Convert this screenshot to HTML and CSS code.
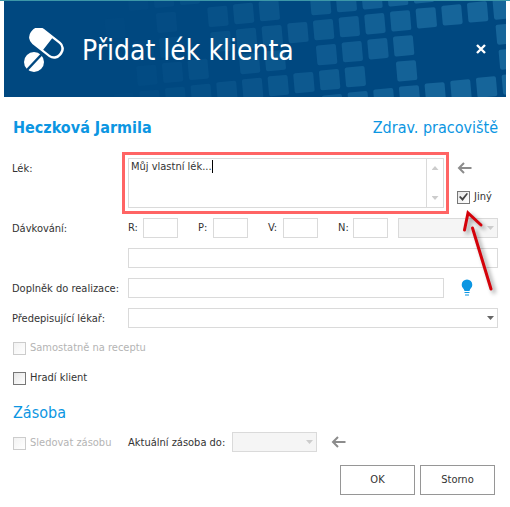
FILE: index.html
```html
<!DOCTYPE html>
<html lang="cs">
<head>
<meta charset="utf-8">
<title>Přidat lék klienta</title>
<link rel="stylesheet" href="styles.css">
</head>
<body>
<main class="dialog">
  <header class="banner">
    <svg class="tiles" id="tiles" width="502" height="96" viewBox="4 1 502 96" aria-hidden="true"></svg>
    <svg class="pills" width="40" height="46" viewBox="0 0 40 46" aria-hidden="true">
      <g transform="translate(22.500 15) rotate(38)">
        <rect x="-19" y="-9.500" width="38" height="19" rx="8.500" fill="#fff"/>
        <path d="M1.500 -7.300H10A6.500 6.500 0 0 1 16.500 -1V1A6.500 6.500 0 0 1 10 7.300H1.500Z" fill="#004880"/>
      </g>
      <circle cx="10" cy="34" r="10" fill="#fff"/>
      <path d="M3 42 18 26" stroke="#004880" stroke-width="2.500"/>
    </svg>
    <h1 class="title">Přidat lék klienta</h1>
    <button class="close" type="button" aria-label="Zavřít">
      <svg width="10" height="10" viewBox="0 0 10 10"><path d="M1 1 9 9M9 1 1 9" stroke="#fff" stroke-width="2.400"/></svg>
    </button>
  </header>

  <form class="form">
    <div class="heading">
      <h2 class="client">Heczková Jarmila</h2>
      <a class="workplace" href="#">Zdrav. pracoviště</a>
    </div>

    <div class="row drug">
      <label class="label" for="drug">Lék:</label>
      <div class="area">
        <textarea class="text" id="drug">Můj vlastní lék...</textarea>
        <span class="caret"></span>
        <span class="scroll"><i class="tri up"></i><i class="tri"></i></span>
        <span class="marker"></span>
      </div>
      <div class="side">
        <button class="back" type="button" aria-label="Zpět">
          <svg width="15" height="12" viewBox="0 0 15 12"><path d="M14.500 6H2M7 1 2 6 7 11" fill="none" stroke="#8c8c8c" stroke-width="2"/></svg>
        </button>
        <label class="check"><input type="checkbox" checked>Jiný</label>
        <svg class="pointer" width="40" height="90" viewBox="0 0 40 90" aria-hidden="true">
          <path d="M12.500 20 31 81M4.500 22 8 5 21 17" fill="none" stroke="#d4020a" stroke-width="3" stroke-linecap="round"/>
        </svg>
      </div>
    </div>

    <div class="row">
      <span class="label">Dávkování:</span>
      <div class="doses">
        <label class="dose">R:<input class="box" type="text"></label>
        <label class="dose">P:<input class="box" type="text"></label>
        <label class="dose">V:<input class="box" type="text"></label>
        <label class="dose">N:<input class="box" type="text"></label>
      </div>
      <span class="pick grow off"><select class="box" aria-label="Jednotka" disabled></select><i class="tri"></i></span>
    </div>

    <div class="row">
      <span class="label"></span>
      <input class="box grow" type="text" aria-label="Popis dávkování">
    </div>

    <div class="row">
      <label class="label" for="extra">Doplněk do realizace:</label>
      <input class="box grow" id="extra" type="text">
      <div class="side hint">
        <svg width="12" height="18" viewBox="0 0 12 18" role="img" aria-label="Nápověda"><path d="M6 0.500A5.300 5.300 0 0 1 11.300 6C11.300 8.600 9 9.500 8.500 12H3.500C3 9.500 0.700 8.600 0.700 6A5.300 5.300 0 0 1 6 0.500Z" fill="#0c96e2"/><path d="M3.500 13.500H8.500M4 16H8" stroke="#0c96e2" stroke-width="1"/></svg>
      </div>
    </div>

    <div class="row">
      <label class="label" for="doctor">Předepisující lékař:</label>
      <span class="pick grow"><select class="box" id="doctor"></select><i class="tri"></i></span>
    </div>

    <label class="check line off"><input type="checkbox" disabled>Samostatně na receptu</label>
    <label class="check line"><input type="checkbox">Hradí klient</label>

    <h2 class="section">Zásoba</h2>
    <div class="row stock">
      <label class="check label off"><input type="checkbox" disabled>Sledovat zásobu</label>
      <label class="until" for="until">Aktuální zásoba do:</label>
      <span class="pick date off"><select class="box" id="until" disabled></select><i class="tri"></i></span>
      <button class="back" type="button" aria-label="Zpět">
        <svg width="15" height="12" viewBox="0 0 15 12"><path d="M14.500 6H2M7 1 2 6 7 11" fill="none" stroke="#8c8c8c" stroke-width="2"/></svg>
      </button>
    </div>

    <div class="actions">
      <button class="button" type="submit">OK</button>
      <button class="button" type="button">Storno</button>
    </div>
  </form>
</main>
<script src="tiles.js"></script>
</body>
</html>
```
FILE: styles.css
```css
* { box-sizing: border-box; }

body {
  margin: 0;
  background: #fff;
  border-top: 1px solid #3c97a8;
  font: 11px/14px "DejaVu Sans Condensed", "DejaVu Sans", sans-serif;
  color: #333;
}

h1, h2 { margin: 0; font-weight: normal; }

button, input, select, textarea { font: inherit; color: inherit; }

.dialog { padding: 0 4px; }

.banner {
  position: relative;
  display: flex;
  align-items: center;
  height: 96px;
  padding: 0 20px;
  background: #004880;
  color: #fff;
  overflow: hidden;
}
.tiles { position: absolute; top: 0; right: 0; }
.pills { position: relative; margin: 4px 18px 0 0; }
.title { position: relative; flex: 1; padding-top: 4px; font-size: 28px; line-height: 32px; }
.close {
  position: relative;
  display: flex;
  padding: 0;
  border: 0;
  background: none;
}

.form { padding: 19px 4px 12px 8px; }

.heading {
  display: flex;
  justify-content: space-between;
  padding: 0 4px 0 1px;
  margin-bottom: 18px;
  font-size: 16px;
  line-height: 24px;
  color: #0c96e2;
}
.client { font-size: 16px; font-weight: bold; }
.workplace { color: inherit; text-decoration: none; }

.row {
  display: flex;
  align-items: center;
  height: 20px;
  padding-right: 4px;
  margin-bottom: 10px;
}
.label { width: 116px; flex: none; padding-top: 2px; white-space: nowrap; }
.grow { flex: 1; min-width: 0; }

.box {
  display: block;
  width: 100%;
  height: 20px;
  padding: 0 4px;
  border: 1px solid #dadada;
  border-radius: 0;
  background: #fff;
  appearance: none;
}
.box.grow { width: auto; }

.drug { height: 50px; align-items: flex-start; }
.drug .label { padding-top: 4px; }
.area { position: relative; flex: 1; height: 50px; }
.text {
  display: block;
  width: 100%;
  height: 100%;
  padding: 1px 20px 1px 2px;
  border: 1px solid #dadada;
  background: #fff;
  resize: none;
  overflow: hidden;
}
.caret {
  position: absolute;
  top: 2px;
  left: 84px;
  width: 1px;
  height: 13px;
  background: #000;
}
.scroll {
  position: absolute;
  top: 1px;
  right: 1px;
  bottom: 1px;
  width: 17px;
  display: flex;
  flex-direction: column;
  align-items: center;
  justify-content: space-between;
  padding: 7px 0;
  border-left: 1px solid #dadada;
}
.marker { position: absolute; inset: -6px -5px -6px -6px; border: 3px solid #ff6464; pointer-events: none; }

.tri {
  width: 7px;
  height: 4px;
  background: #666;
  clip-path: polygon(0 0, 100% 0, 50% 100%);
}
.off .tri, .scroll .tri { background: #ccc; }
.tri.up { clip-path: polygon(0 100%, 100% 100%, 50% 0); }

.side {
  position: relative;
  z-index: 1;
  width: 54px;
  flex: none;
  display: flex;
  flex-direction: column;
  align-items: flex-start;
  padding: 4px 0 0 13px;
  gap: 16px;
}
.side.hint { padding: 0 0 0 17px; }
.back { display: flex; padding: 0; border: 0; background: none; }
.pointer {
  position: absolute;
  top: 50px;
  left: 16px;
  filter: drop-shadow(3px 3px 2px #00000066);
  overflow: visible;
  pointer-events: none;
}

.check { display: flex; align-items: center; gap: 4px; white-space: nowrap; }
.check input {
  position: relative;
  width: 13px;
  height: 13px;
  margin: 0;
  border: 1px solid #777;
  background: linear-gradient(135deg, #e6e6e6, #fff);
  appearance: none;
}
.check input:checked::after {
  content: "";
  position: absolute;
  inset: 1px;
  background: #444;
  clip-path: polygon(0 50%, 15% 38%, 38% 62%, 85% 5%, 100% 15%, 40% 95%);
}
.check.off { color: #b4b4b4; }
.check.off input { border-color: #ccc; background: linear-gradient(135deg, #f2f2f2, #fff); }
.check.line { height: 14px; margin: 0 0 16px 1px; }
.row + .check.line { margin-top: 13px; }
.check.label { padding-left: 1px; }

.doses { display: flex; gap: 20px; padding-right: 10px; }
.dose { display: flex; align-items: center; justify-content: space-between; width: 50px; }
.dose .box { width: 35px; }

.pick { position: relative; }
.pick .tri { position: absolute; top: 8px; right: 4px; }
.pick.off .box { background: #f5f5f5; opacity: 1; }

.section {
  margin: 0 0 7px 1px;
  font-size: 16px;
  line-height: 24px;
  color: #0c96e2;
}
.stock { margin-bottom: 13px; }
.until { width: 104px; padding-top: 2px; white-space: nowrap; }
.date { width: 85px; margin-right: 14px; }

.actions { display: flex; justify-content: flex-end; gap: 5px; padding-right: 7px; }
.button {
  width: 75px;
  height: 30px;
  padding: 0;
  border: 1px solid #969696;
  background: #fff;
}
```
FILE: tiles.js
```js
// Slanted mosaic: each row lists the columns that hold a tile.
const rows = {
  "-2": [-8, -7, -6],
  "-1": [-9, -7, -5, -4, -3, -1, 0, 1, 2, 3],
  "0": [-8, -7, -5, -4, -3, -2, -1, 0, 1, 2, 3, 4, 5, 6],
  "1": [-8, -7, -6, -4, -3, -1, 0, 1, 2, 6],
  "2": [-9, -8, -7, -6, -5, -4, -3, -2, -1, 0, 2, 6],
  "3": [-9, -8, -1, 0, 1, 2, 3, 4, 5, 6]
};
const svg = document.getElementById("tiles");
for (const [row, columns] of Object.entries(rows)) {
  for (const column of columns) {
    const x = 349.3 + 25.67 * column + 3 * row;
    const y = 26.7 - 2.95 * column + 25 * row;
    const tile = document.createElementNS("http://www.w3.org/2000/svg", "rect");
    tile.setAttribute("x", -10);
    tile.setAttribute("y", -10);
    tile.setAttribute("width", 20);
    tile.setAttribute("height", 20);
    tile.setAttribute("rx", 2);
    tile.setAttribute("fill", "#18689c");
    tile.setAttribute("opacity", Math.min(0.9, Math.max(0.06, (x - 110) / 360)));
    tile.setAttribute("transform", `translate(${x} ${y}) rotate(-5)`);
    svg.append(tile);
  }
}
```
